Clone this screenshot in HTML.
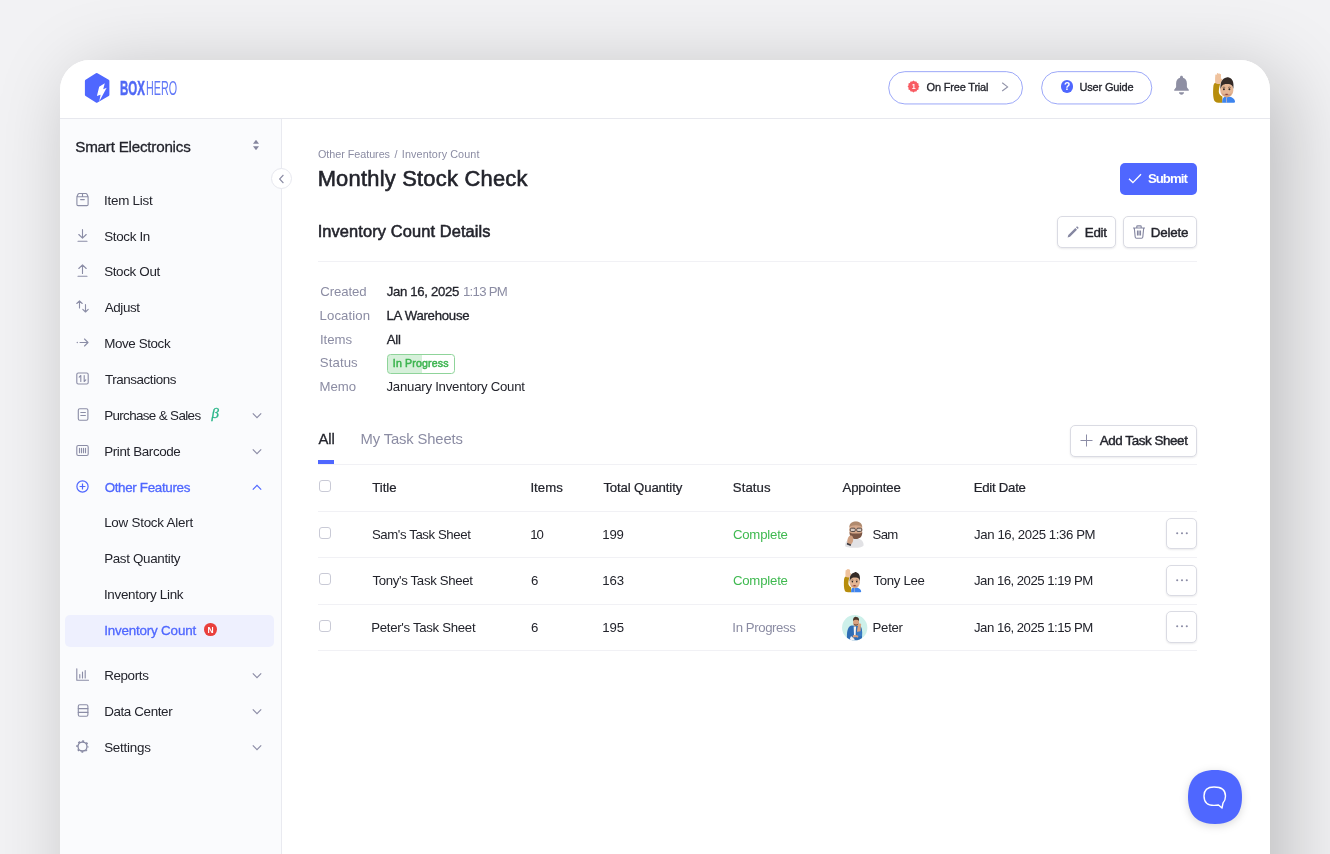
<!DOCTYPE html>
<html lang="en">
<head>
<meta charset="utf-8">
<title>BoxHero - Inventory Count</title>
<style>
*{box-sizing:border-box;margin:0;padding:0}
html,body{width:1330px;height:854px;overflow:hidden}
body{font-family:"Liberation Sans",sans-serif;color:#23242c;background:#f2f2f4;position:relative}
.abs{position:absolute}
.card{position:absolute;left:60px;top:60px;width:1210px;height:900px;background:#fff;border-radius:30px 30px 0 0;box-shadow:15px 15px 80px rgba(0,0,0,.23)}
.clip{will-change:opacity;position:absolute;left:0;top:0;width:1210px;height:900px;border-radius:30px 30px 0 0;overflow:hidden}
.hdr{position:absolute;left:0;top:0;width:1210px;height:59px;border-bottom:1px solid #e7e8ee;background:#fff}
.side{position:absolute;left:0;top:59px;width:222px;height:841px;background:#fafbfd;border-right:1px solid #e9eaf0}
.t{position:absolute;white-space:nowrap;line-height:1}
.ic{position:absolute;overflow:visible}
.pill{position:absolute;height:33px;border:1px solid #aab4fa;border-radius:17px;background:#fff}
.btn{position:absolute;border:1px solid #dadbe3;border-radius:5px;background:#fff;box-shadow:0 1px 2px rgba(20,20,40,.09)}
.hl{position:absolute;height:1px;background:#f1f1f5}
.cb{position:absolute;width:12px;height:12px;border:1px solid #c9cad6;border-radius:3px;background:#fff}
</style>
</head>
<body>
<div class="card"><div class="clip">
<header>
<div class="hdr"></div>
<svg class="ic" style="left:24px;top:12px" width="28" height="34" viewBox="0 0 28 34">
<path d="M13.500 1.300 L24.700 7.800 Q25.400 8.300 25.400 9.100 L25.400 22.800 Q25.400 23.600 24.700 24.100 L13.500 30.600 Q12.700 31.100 11.900 30.600 L1.600 24.100 Q.900 23.600 .900 22.800 L.900 9.100 Q.900 8.300 1.600 7.800 L11.900 1.300 Q12.700 .800 13.500 1.300 Z" fill="#4f67ff"/>
<path d="M20.800 11.200 L15.200 14.700 L12.900 24.100 L16.600 22.700 L15.200 29.400 L22.700 15.700 L19.200 17.300 Z" fill="#fff"/>
</svg>
<div class="t" id="logo" style="left:59.500px;top:17.900px;font-size:20.300px;color:#5068f5;transform-origin:0 0;transform:scaleX(.565);font-weight:700;-webkit-text-stroke:.5px #5068f5">BOX</div>
<div class="t" id="logo2" style="left:85.800px;top:17.900px;font-size:20.300px;color:#6178f7;transform-origin:0 0;transform:scaleX(.53)">HERO</div>
<svg class="ic" style="left:828px;top:11.350px" width="136" height="34" viewBox="0 0 136 34"><rect x=".7" y=".65" width="133.800" height="32.300" rx="16.150" fill="#fff" stroke="#8a98f7" stroke-width=".85"/></svg>
<svg class="ic" style="left:847px;top:20px" width="13" height="13" viewBox="0 0 13 13"><path d="M6.5 0.6l1.3 1 1.6-.2.7 1.5 1.5.7-.2 1.6 1 1.3-1 1.3.2 1.6-1.5.7-.7 1.5-1.6-.2-1.3 1-1.3-1-1.6.2-.7-1.5-1.5-.7.2-1.6-1-1.3 1-1.3-.2-1.6 1.5-.7.7-1.5 1.6.2z" fill="#f85c63"/></svg>
<div class="t" id="badge1" style="left:851.70px;top:23px;font-size:7px;color:#fff;font-weight:700;">1</div>
<div class="t" id="trial" style="left:866.62px;top:22px;font-size:11px;color:#23242c;letter-spacing:-0.192px;-webkit-text-stroke:.3px #23242c;">On Free Trial</div>
<svg class="ic" style="left:941px;top:22px" width="8" height="10" viewBox="0 0 8 10"><path d="M1.2 0.8 L6.6 4.9 L1.2 9" fill="none" stroke="#9092a8" stroke-width="1.1"/></svg>
<svg class="ic" style="left:981px;top:11.350px" width="112" height="34" viewBox="0 0 112 34"><rect x=".6" y=".65" width="110.200" height="32.300" rx="16.150" fill="#fff" stroke="#8a98f7" stroke-width=".85"/></svg>
<div class="abs" style="left:1000.5px;top:20px;width:12.6px;height:12.6px;border-radius:50%;background:#4f67ff"></div>
<div class="t" id="q" style="left:1004.00px;top:22px;font-size:10.3px;color:#fff;font-weight:700;">?</div>
<div class="t" id="guide" style="left:1019.39px;top:22px;font-size:11px;color:#23242c;letter-spacing:-0.149px;-webkit-text-stroke:.3px #23242c;">User Guide</div>
<svg class="ic" style="left:1113px;top:14.700px" width="17" height="21.800" viewBox="0 0 17 21" preserveAspectRatio="none"><path d="M8.5 0.8c.9 0 1.5.6 1.5 1.4v.5c2.5.7 3.9 2.8 3.9 5.5v3.6l1.9 2.5v.9H1.2v-.9l1.9-2.5V8.2c0-2.7 1.4-4.800 3.9-5.500v-.5c0-.8.6-1.400 1.500-1.400z" fill="#8e8fa3"/><path d="M6 16.700h5c0 1.400-1.100 2.300-2.500 2.300s-2.500-.9-2.500-2.300z" fill="#8e8fa3"/></svg>
<svg class="ic" style="left:1152px;top:12px" width="25" height="32" viewBox="0 0 25 32"><path d="M1.400 14 C.800 20 1 26 2.500 29 C3.500 30.600 6 30.800 10.400 30.700 L10.400 24.500 C8.500 23.500 7 22 6.800 20 C6.800 17 7.500 14 8.200 11.500 L3.200 10.800 C2.200 11.500 1.600 12.500 1.400 14 Z" fill="#b78d0c"/>
<path d="M3.300 3.600 C3.100 2.200 4.200 2 4.500 3 L4.800 2 C5 .900 6.200 .800 6.300 1.900 C6.600 .900 7.800 1 7.800 2.200 C8.300 1.600 9.200 2 9 3.200 L8.900 7 C9.800 6.400 10.800 6.800 10.200 7.800 L8.400 11.800 C7 12.300 4.500 12 3.300 11 C3 9 3 6 3.300 3.600 Z" fill="#efc29d"/>
<path d="M10.200 30.700 C10.200 26.500 11.500 24.300 14.800 24.300 C19 24.300 22.600 26.500 23 29.500 C23 30.400 22.500 30.700 21.500 30.700 Z" fill="#3d84ee"/>
<path d="M14.500 25.500 V30.700" stroke="#e9c9c0" stroke-width=".6"/>
<ellipse cx="14.800" cy="18.100" rx="6.600" ry="7.400" fill="#e4b593"/>
<path d="M8.600 17.500 C7.800 11 10 6.500 14.500 5.600 C16 4.800 17 5.200 17.500 5.800 C20.500 6.800 22.200 10.500 21.300 17 C20.800 13.500 19.500 11.800 14.800 11.900 C10.500 11.900 9.300 14 8.600 17.500 Z" fill="#352b27"/>
<path d="M9.800 20.500 C10.800 26.200 18.800 26.200 19.900 20.500 C18.500 23.300 11.300 23.300 9.800 20.500 Z" fill="#cf9d7d"/>
<ellipse cx="11.900" cy="17.300" rx=".95" ry="1.050" fill="#2b2320"/><ellipse cx="17.400" cy="17.300" rx=".95" ry="1.050" fill="#2b2320"/>
<path d="M10.600 15.500 Q11.900 14.700 13.200 15.500 M16.100 15.500 Q17.400 14.700 18.700 15.500" stroke="#4a3a32" stroke-width=".6" fill="none"/>
<path d="M12.600 22 Q14.600 21.300 16.600 22 Q14.600 24.200 12.600 22 Z" fill="#8c3a36"/></svg>
</header>
<aside><nav>
<div class="side"></div>
<div class="t" id="store" style="left:15.26px;top:79px;font-size:15.2px;color:#23242c;letter-spacing:-0.219px;-webkit-text-stroke:.3px #23242c;">Smart Electronics</div>
<svg class="ic" style="left:192px;top:79px" width="8" height="12" viewBox="0 0 8 12"><path d="M4 .8 L7 4.700 H1 Z M4 11.200 L1 7.300 H7 Z" fill="#85869e"/></svg>
<div class="abs" style="left:211px;top:108px;width:21px;height:21px;border-radius:50%;background:#fff;border:1px solid #e6e7ee"></div>
<svg class="ic" style="left:218px;top:114px" width="7" height="10" viewBox="0 0 7 10"><path d="M5.400 1 L1.600 5 L5.400 9" fill="none" stroke="#8a8ba3" stroke-width="1.1"/></svg>
<svg class="ic" style="left:15.800px;top:133.30px" width="13" height="13" viewBox="0 0 13 13"><path d="M.9 3.700 V11.400 Q.9 12.600 2.100 12.600 H10.900 Q12.100 12.600 12.100 11.400 V3.700 M.9 3.700 L2 1.300 Q2.400 .5 3.200 .5 H9.800 Q10.600 .5 11 1.300 L12.100 3.700 M.9 3.700 H12.100 M6.500 .5 V3.700 M4.600 6.600 H8.300" stroke="#8b8da6" stroke-width="1.120" fill="none" stroke-linecap="round" stroke-linejoin="round"/></svg>
<div class="t" id="m0" style="left:43.95px;top:134px;font-size:13.4px;color:#23242c;letter-spacing:-0.224px;">Item List</div>
<svg class="ic" style="left:15.800px;top:169.30px" width="13" height="13" viewBox="0 0 13 13"><path d="M6.500 .5 V9 M2.800 5.500 L6.500 9.200 L10.200 5.500 M2 12.300 H11" stroke="#8b8da6" stroke-width="1.120" fill="none" stroke-linecap="round" stroke-linejoin="round"/></svg>
<div class="t" id="m1" style="left:44.17px;top:170px;font-size:13.4px;color:#23242c;letter-spacing:-0.322px;">Stock In</div>
<svg class="ic" style="left:15.800px;top:204.30px" width="13" height="13" viewBox="0 0 13 13"><path d="M6.500 9.500 V1 M2.800 4.500 L6.500 .8 L10.200 4.500 M2 12.300 H11" stroke="#8b8da6" stroke-width="1.120" fill="none" stroke-linecap="round" stroke-linejoin="round"/></svg>
<div class="t" id="m2" style="left:44.17px;top:205px;font-size:13.4px;color:#23242c;letter-spacing:-0.342px;">Stock Out</div>
<svg class="ic" style="left:15.800px;top:240.30px" width="13" height="13" viewBox="0 0 13 13"><path d="M3.500 8 V.8 M.8 3.500 L3.500 .8 L6.200 3.500 M9.500 4.500 V12 M6.800 9.300 L9.500 12 L12.200 9.300" stroke="#8b8da6" stroke-width="1.120" fill="none" stroke-linecap="round" stroke-linejoin="round"/></svg>
<div class="t" id="m3" style="left:44.86px;top:241px;font-size:13.4px;color:#23242c;letter-spacing:-0.443px;">Adjust</div>
<svg class="ic" style="left:15.800px;top:276.30px" width="13" height="13" viewBox="0 0 13 13"><path d="M4 6.500 H12 M8.500 3 L12 6.500 L8.500 10" stroke="#8b8da6" stroke-width="1.120" fill="none" stroke-linecap="round" stroke-linejoin="round"/><circle cx="1.300" cy="6.500" r=".7" fill="#8c8da6"/></svg>
<div class="t" id="m4" style="left:44.15px;top:277px;font-size:13.4px;color:#23242c;letter-spacing:-0.389px;">Move Stock</div>
<svg class="ic" style="left:15.800px;top:312.30px" width="13" height="13" viewBox="0 0 13 13"><rect x=".8" y="1" width="11.400" height="11" rx="1.500" stroke="#8b8da6" stroke-width="1.120" fill="none" stroke-linecap="round" stroke-linejoin="round"/><path d="M4.800 9.500 V3.500 M3.200 5.200 L4.800 3.500 M8.200 3.500 V9.500 M9.800 7.800 L8.200 9.500" stroke="#8b8da6" stroke-width="1.120" fill="none" stroke-linecap="round" stroke-linejoin="round"/></svg>
<div class="t" id="m5" style="left:44.92px;top:313px;font-size:13.4px;color:#23242c;letter-spacing:-0.416px;">Transactions</div>
<svg class="ic" style="left:15.800px;top:348.30px" width="13" height="13" viewBox="0 0 13 13"><rect x="2.300" y=".8" width="9.600" height="11.400" rx="1.500" stroke="#8b8da6" stroke-width="1.120" fill="none" stroke-linecap="round" stroke-linejoin="round"/><path d="M4.800 4.500 H9.400 M4.800 7.500 H9.400" stroke="#8b8da6" stroke-width="1.120" fill="none" stroke-linecap="round" stroke-linejoin="round"/></svg>
<div class="t" id="m6" style="left:44.15px;top:349px;font-size:13.4px;color:#23242c;letter-spacing:-0.633px;">Purchase &amp; Sales</div>
<svg class="ic" style="left:191.500px;top:352.20px" width="10" height="7" viewBox="0 0 10 7"><path d="M.8 1.400 L5 5.600 L9.200 1.400" fill="none" stroke="#8c8da6" stroke-width="1.200"/></svg>
<svg class="ic" style="left:15.800px;top:384.30px" width="13" height="13" viewBox="0 0 13 13"><rect x=".8" y="1.500" width="11.400" height="10" rx="1.500" stroke="#8b8da6" stroke-width="1.120" fill="none" stroke-linecap="round" stroke-linejoin="round"/><path d="M3.500 4.300 V8.700 M5.500 4.300 V8.700 M7.500 4.300 V8.700 M9.500 4.300 V8.700" stroke="#8b8da6" stroke-width="1.120" fill="none" stroke-linecap="round" stroke-linejoin="round"/></svg>
<div class="t" id="m7" style="left:44.15px;top:385px;font-size:13.4px;color:#23242c;letter-spacing:-0.372px;">Print Barcode</div>
<svg class="ic" style="left:191.500px;top:388.20px" width="10" height="7" viewBox="0 0 10 7"><path d="M.8 1.400 L5 5.600 L9.200 1.400" fill="none" stroke="#8c8da6" stroke-width="1.200"/></svg>
<div class="t" id="beta" style="left:151.50px;top:346px;font-size:15px;color:#2bb68a;font-family:'Liberation Serif','DejaVu Serif',serif;font-style:italic;-webkit-text-stroke:.3px #2bb68a;">β</div>
<svg class="ic" style="left:15.800px;top:419.50px" width="13" height="13" viewBox="0 0 13 13"><circle cx="6.500" cy="6.500" r="5.600" stroke="#4f67ff" stroke-width="1.200" fill="none"/><path d="M6.500 3.600 V9.400 M3.600 6.500 H9.400" stroke="#4f67ff" stroke-width="1.200" fill="none"/></svg>
<div class="t" id="m8" style="left:44.64px;top:421px;font-size:13.4px;color:#4f67ff;letter-spacing:-0.335px;-webkit-text-stroke:.3px #4f67ff;">Other Features</div>
<svg class="ic" style="left:191.500px;top:423.90px" width="10" height="7" viewBox="0 0 10 7"><path d="M.8 5.600 L5 1.400 L9.200 5.600" fill="none" stroke="#4f67ff" stroke-width="1.200"/></svg>
<div class="abs" style="left:5px;top:555px;width:208.700px;height:31.800px;border-radius:5px;background:#eef0fe"></div>
<div class="t" id="s0" style="left:44.15px;top:456px;font-size:13.4px;color:#23242c;letter-spacing:-0.238px;">Low Stock Alert</div>
<div class="t" id="s1" style="left:44.15px;top:492px;font-size:13.4px;color:#23242c;letter-spacing:-0.330px;">Past Quantity</div>
<div class="t" id="s2" style="left:43.95px;top:528px;font-size:13.4px;color:#23242c;letter-spacing:-0.290px;">Inventory Link</div>
<div class="t" id="s3" style="left:44.13px;top:564px;font-size:13.4px;color:#4f67ff;letter-spacing:-0.180px;-webkit-text-stroke:.3px #4f67ff;">Inventory Count</div>
<div class="abs" style="left:144.100px;top:563px;width:12.800px;height:12.800px;border-radius:50%;background:#e9403c"></div>
<div class="t" id="nb" style="left:147.60px;top:566px;font-size:8.5px;color:#fff;font-weight:700;">N</div>
<svg class="ic" style="left:15.800px;top:608.30px" width="13" height="13" viewBox="0 0 13 13"><path d="M.8 .8 V12.200 H12.500 M3.800 10 V6.500 M6.500 10 V4 M9.200 10 V2.500" stroke="#8b8da6" stroke-width="1.120" fill="none" stroke-linecap="round" stroke-linejoin="round"/></svg>
<div class="t" id="r0" style="left:44.15px;top:609px;font-size:13.4px;color:#23242c;letter-spacing:-0.365px;">Reports</div>
<svg class="ic" style="left:191.500px;top:612.40px" width="10" height="7" viewBox="0 0 10 7"><path d="M.8 1.400 L5 5.600 L9.200 1.400" fill="none" stroke="#8c8da6" stroke-width="1.200"/></svg>
<svg class="ic" style="left:15.800px;top:644.30px" width="13" height="13" viewBox="0 0 13 13"><rect x="2.300" y=".8" width="9.600" height="11.400" rx="1.500" stroke="#8b8da6" stroke-width="1.120" fill="none" stroke-linecap="round" stroke-linejoin="round"/><path d="M2.300 4.600 H11.900 M2.300 8.400 H11.900" stroke="#8b8da6" stroke-width="1.120" fill="none" stroke-linecap="round" stroke-linejoin="round"/></svg>
<div class="t" id="r1" style="left:44.15px;top:645px;font-size:13.4px;color:#23242c;letter-spacing:-0.372px;">Data Center</div>
<svg class="ic" style="left:191.500px;top:648.40px" width="10" height="7" viewBox="0 0 10 7"><path d="M.8 1.400 L5 5.600 L9.200 1.400" fill="none" stroke="#8c8da6" stroke-width="1.200"/></svg>
<svg class="ic" style="left:15.800px;top:680.30px" width="13" height="13" viewBox="0 0 13 13"><circle cx="6.500" cy="6.500" r="4.500" stroke="#8587a1" stroke-width="1.300" fill="none"/><circle cx="6.500" cy="6.500" r="5.500" stroke="#8587a1" stroke-width="1.400" fill="none" stroke-dasharray="1.900 2.420" stroke-dashoffset=".95"/></svg>
<div class="t" id="r2" style="left:44.17px;top:681px;font-size:13.4px;color:#23242c;letter-spacing:-0.239px;">Settings</div>
<svg class="ic" style="left:191.500px;top:684.40px" width="10" height="7" viewBox="0 0 10 7"><path d="M.8 1.400 L5 5.600 L9.200 1.400" fill="none" stroke="#8c8da6" stroke-width="1.200"/></svg>
</nav></aside>
<main>
<div class="t" id="bc" style="left:257.99px;top:89px;font-size:10.8px;color:#8b8ca3;letter-spacing:-0.045px;">Other Features</div>
<div class="t" id="bc2" style="left:334.59px;top:89px;font-size:10.8px;color:#8b8ca3;">/</div>
<div class="t" id="bc3" style="left:341.87px;top:89px;font-size:10.8px;color:#8b8ca3;letter-spacing:0.096px;">Inventory Count</div>
<div class="t" id="title" style="left:257.64px;top:108px;font-size:21.9px;color:#23242c;letter-spacing:0.232px;-webkit-text-stroke:.6px #23242c;">Monthly Stock Check</div>
<div class="abs" style="left:1059.800px;top:102.600px;width:77.300px;height:32.200px;border-radius:5px;background:#4f67ff"></div>
<svg class="ic" style="left:1068px;top:112.800px" width="14" height="11" viewBox="0 0 14 11"><path d="M1 5.800 L4.900 9.600 L13 1.200" fill="none" stroke="#fff" stroke-width="1.350"/></svg>
<div class="t" id="submit" style="left:1087.90px;top:112px;font-size:13.2px;color:#fff;font-weight:700;letter-spacing:-0.959px;">Submit</div>
<div class="t" id="icd" style="left:257.64px;top:163px;font-size:16.4px;color:#23242c;letter-spacing:0.114px;-webkit-text-stroke:.55px #23242c;">Inventory Count Details</div>
<div class="btn" style="left:997px;top:156px;width:59px;height:32px"></div>
<svg class="ic" style="left:1006.500px;top:165.500px" width="13" height="13" viewBox="0 0 13 13"><path d="M.6 11.600 L1.300 9 L8.300 2 L10 3.700 L3 10.700 Z M9 1.300 L9.700 .6 Q10.100 .2 10.500 .6 L11.400 1.500 Q11.800 1.900 11.400 2.300 L10.700 3 Z" fill="#8587a1"/></svg>
<div class="t" id="edit" style="left:1024.84px;top:166px;font-size:13.4px;color:#23242c;letter-spacing:-0.330px;-webkit-text-stroke:.4px #23242c;">Edit</div>
<div class="btn" style="left:1063px;top:156px;width:74px;height:32px"></div>
<svg class="ic" style="left:1072px;top:165px" width="14" height="14" viewBox="0 0 14 14"><path d="M1 3 H13 M4.800 3 V1.500 Q4.800 .8 5.500 .8 H8.500 Q9.200 .8 9.200 1.500 V3 M2.300 3 L3.200 12 Q3.300 13.200 4.500 13.200 H9.500 Q10.700 13.200 10.800 12 L11.700 3 M5.500 5.500 V10.500 M7 5.500 V10.500 M8.500 5.500 V10.500" fill="none" stroke="#8587a1" stroke-width="1.150"/></svg>
<div class="t" id="delete" style="left:1090.83px;top:166px;font-size:13.4px;color:#23242c;letter-spacing:-0.193px;-webkit-text-stroke:.4px #23242c;">Delete</div>
<div class="hl" style="left:258px;top:201px;width:879px"></div>
<div class="t" id="l0" style="left:260.28px;top:225px;font-size:13.2px;color:#8b8ca3;letter-spacing:-0.081px;">Created</div>
<div class="t" id="l1" style="left:259.59px;top:249px;font-size:13.2px;color:#8b8ca3;letter-spacing:0.085px;">Location</div>
<div class="t" id="l2" style="left:259.90px;top:273px;font-size:13.2px;color:#8b8ca3;letter-spacing:0.014px;">Items</div>
<div class="t" id="l3" style="left:259.84px;top:296px;font-size:13.2px;color:#8b8ca3;letter-spacing:0.097px;">Status</div>
<div class="t" id="l4" style="left:259.59px;top:320px;font-size:13.2px;color:#8b8ca3;letter-spacing:-0.016px;">Memo</div>
<div class="t" id="v0" style="left:326.73px;top:225px;font-size:13.2px;color:#23242c;letter-spacing:-0.337px;-webkit-text-stroke:.3px #23242c;">Jan 16, 2025</div>
<div class="t" id="v0b" style="left:402.97px;top:225px;font-size:13.2px;color:#8b8ca3;letter-spacing:-0.712px;">1:13 PM</div>
<div class="t" id="v1" style="left:326.44px;top:249px;font-size:13.2px;color:#23242c;letter-spacing:-0.262px;-webkit-text-stroke:.3px #23242c;">LA Warehouse</div>
<div class="t" id="v2" style="left:326.71px;top:273px;font-size:13.2px;color:#23242c;letter-spacing:-0.171px;-webkit-text-stroke:.3px #23242c;">All</div>
<div class="abs" style="left:327px;top:294px;width:68.300px;height:19.700px;border:1px solid #8fd49a;border-radius:3.500px;background:linear-gradient(90deg,#d6f0da 0,#d6f0da 33.700px,#fff 33.700px,#fff 100%)"></div>
<div class="t" id="ip" style="left:332.79px;top:298px;font-size:10.6px;color:#3cb44f;letter-spacing:0.167px;-webkit-text-stroke:.5px #3cb44f;">In Progress</div>
<div class="t" id="v4" style="left:326.50px;top:320px;font-size:13.2px;color:#23242c;letter-spacing:-0.237px;">January Inventory Count</div>
<div class="t" id="tab1" style="left:258.44px;top:372px;font-size:14.8px;color:#23242c;letter-spacing:-0.101px;-webkit-text-stroke:.3px #23242c;">All</div>
<div class="t" id="tab2" style="left:300.47px;top:372px;font-size:14.8px;color:#8b8ca3;letter-spacing:-0.137px;">My Task Sheets</div>
<div class="hl" style="left:258px;top:404px;width:879px"></div>
<div class="abs" style="left:258px;top:400px;width:16px;height:4px;background:#4f67ff"></div>
<div class="btn" style="left:1010.100px;top:365px;width:126.900px;height:32px"></div>
<svg class="ic" style="left:1020px;top:374.300px" width="13" height="13" viewBox="0 0 13 13"><path d="M6.500 .5 V12.500 M.5 6.500 H12.500" fill="none" stroke="#8c8da6" stroke-width="1"/></svg>
<div class="t" id="add" style="left:1039.73px;top:374px;font-size:13.4px;color:#23242c;letter-spacing:-0.415px;-webkit-text-stroke:.4px #23242c;">Add Task Sheet</div>
<div class="cb" style="left:259px;top:420.400px"></div>
<div class="t" id="h1" style="left:312.31px;top:421px;font-size:13.2px;color:#23242c;letter-spacing:-0.033px;-webkit-text-stroke:.22px #23242c;">Title</div>
<div class="t" id="h2" style="left:470.39px;top:421px;font-size:13.2px;color:#23242c;letter-spacing:0.084px;-webkit-text-stroke:.22px #23242c;">Items</div>
<div class="t" id="h3" style="left:543.38px;top:421px;font-size:13.2px;color:#23242c;letter-spacing:-0.135px;-webkit-text-stroke:.22px #23242c;">Total Quantity</div>
<div class="t" id="h4" style="left:672.79px;top:421px;font-size:13.2px;color:#23242c;letter-spacing:0.079px;-webkit-text-stroke:.22px #23242c;">Status</div>
<div class="t" id="h5" style="left:782.50px;top:421px;font-size:13.2px;color:#23242c;letter-spacing:-0.146px;-webkit-text-stroke:.22px #23242c;">Appointee</div>
<div class="t" id="h6" style="left:913.63px;top:421px;font-size:13.2px;color:#23242c;letter-spacing:-0.248px;-webkit-text-stroke:.22px #23242c;">Edit Date</div>
<div class="hl" style="left:258px;top:451px;width:879px"></div>
<div class="cb" style="left:259px;top:466.90px"></div>
<div class="t" id="a0" style="left:311.94px;top:468px;font-size:13.2px;color:#23242c;letter-spacing:-0.401px;">Sam's Task Sheet</div>
<div class="t" id="b0" style="left:470.22px;top:468px;font-size:13.2px;color:#23242c;letter-spacing:-1.089px;">10</div>
<div class="t" id="c0" style="left:542.37px;top:468px;font-size:13.2px;color:#23242c;letter-spacing:-0.243px;">199</div>
<div class="t" id="d0" style="left:672.91px;top:468px;font-size:13.2px;color:#3fb950;letter-spacing:-0.203px;">Complete</div>
<div class="t" id="e0" style="left:812.56px;top:468px;font-size:13.2px;color:#23242c;letter-spacing:-0.680px;">Sam</div>
<div class="t" id="f0" style="left:914.06px;top:468px;font-size:13.2px;color:#23242c;letter-spacing:-0.394px;">Jan 16, 2025 1:36 PM</div>
<div class="btn" style="left:1105.700px;top:458.10px;width:31px;height:31.400px"></div>
<svg class="ic" style="left:1115.700px;top:471.90px" width="12" height="3" viewBox="0 0 12 3"><circle cx="1.200" cy="1.200" r="1.050" fill="#8c8da6"/><circle cx="6" cy="1.200" r="1.050" fill="#8c8da6"/><circle cx="10.800" cy="1.200" r="1.050" fill="#8c8da6"/></svg>
<div class="hl" style="left:258px;top:497.00px;width:879px"></div>
<div class="cb" style="left:259px;top:512.90px"></div>
<div class="t" id="a1" style="left:312.39px;top:514px;font-size:13.2px;color:#23242c;letter-spacing:-0.311px;">Tony's Task Sheet</div>
<div class="t" id="b1" style="left:470.94px;top:514px;font-size:13.2px;color:#23242c;">6</div>
<div class="t" id="c1" style="left:542.37px;top:514px;font-size:13.2px;color:#23242c;letter-spacing:-0.154px;">163</div>
<div class="t" id="d1" style="left:672.91px;top:514px;font-size:13.2px;color:#3fb950;letter-spacing:-0.203px;">Complete</div>
<div class="t" id="e1" style="left:813.51px;top:514px;font-size:13.2px;color:#23242c;letter-spacing:-0.323px;">Tony Lee</div>
<div class="t" id="f1" style="left:914.06px;top:514px;font-size:13.2px;color:#23242c;letter-spacing:-0.522px;">Jan 16, 2025 1:19 PM</div>
<div class="btn" style="left:1105.700px;top:504.70px;width:31px;height:31.400px"></div>
<svg class="ic" style="left:1115.700px;top:518.50px" width="12" height="3" viewBox="0 0 12 3"><circle cx="1.200" cy="1.200" r="1.050" fill="#8c8da6"/><circle cx="6" cy="1.200" r="1.050" fill="#8c8da6"/><circle cx="10.800" cy="1.200" r="1.050" fill="#8c8da6"/></svg>
<div class="hl" style="left:258px;top:544.00px;width:879px"></div>
<div class="cb" style="left:259px;top:559.90px"></div>
<div class="t" id="a2" style="left:311.34px;top:561px;font-size:13.2px;color:#23242c;letter-spacing:-0.299px;">Peter's Task Sheet</div>
<div class="t" id="b2" style="left:470.94px;top:561px;font-size:13.2px;color:#23242c;">6</div>
<div class="t" id="c2" style="left:542.37px;top:561px;font-size:13.2px;color:#23242c;letter-spacing:-0.135px;">195</div>
<div class="t" id="d2" style="left:672.37px;top:561px;font-size:13.2px;color:#8b8ca3;letter-spacing:-0.396px;">In Progress</div>
<div class="t" id="e2" style="left:812.55px;top:561px;font-size:13.2px;color:#23242c;letter-spacing:-0.263px;">Peter</div>
<div class="t" id="f2" style="left:914.06px;top:561px;font-size:13.2px;color:#23242c;letter-spacing:-0.522px;">Jan 16, 2025 1:15 PM</div>
<div class="btn" style="left:1105.700px;top:551.30px;width:31px;height:31.400px"></div>
<svg class="ic" style="left:1115.700px;top:565.10px" width="12" height="3" viewBox="0 0 12 3"><circle cx="1.200" cy="1.200" r="1.050" fill="#8c8da6"/><circle cx="6" cy="1.200" r="1.050" fill="#8c8da6"/><circle cx="10.800" cy="1.200" r="1.050" fill="#8c8da6"/></svg>
<div class="hl" style="left:258px;top:590.20px;width:879px"></div>
<svg class="ic" style="left:783px;top:459.800px" width="24" height="29" viewBox="0 0 24 29">
<path d="M2.100 25.500 C2.100 21 5.500 18.200 11.500 18 C17.500 18 20.600 21 20.600 25 C20.600 27.200 16 27.800 11.500 27.800 C6 27.800 2.100 27.400 2.100 25.500 Z" fill="#e2e2e5"/>
<ellipse cx="12.800" cy="9.800" rx="6.600" ry="8" fill="#d6a98c"/>
<path d="M6.300 7.500 C6.500 3 9.500 1.600 12.800 1.600 C16.100 1.600 19.100 3 19.300 7.500 C17.500 4.500 8.100 4.500 6.300 7.500 Z" fill="#b08a6e"/>
<path d="M6.500 12 C6.500 17 9 19 12.800 19 C16.600 19 19.300 17 19.300 12 C18 14 15 13.500 12.800 13.500 C10.600 13.500 8 14 6.500 12 Z" fill="#7a5645"/>
<rect x="7.300" y="8.200" width="5" height="3.300" rx="1.200" fill="#d9c9c0" stroke="#3a3434" stroke-width=".8"/><rect x="13.700" y="8.200" width="5" height="3.300" rx="1.200" fill="#d9c9c0" stroke="#3a3434" stroke-width=".8"/>
<path d="M4.300 22 C4.300 18 6 15.500 7.800 15.500 C9.500 15.500 10.500 17.500 10.200 20 C10 22.500 8.500 24.800 6.500 24.800 C5 24.800 4.300 23.500 4.300 22 Z" fill="#cf9f80"/>
<path d="M4 22.800 L8.200 24.400 L7.600 26 L3.800 24.600 Z" fill="#3a3a40"/>
</svg>
<svg class="ic" style="left:783.350px;top:508.400px" width="19.750" height="25.300" viewBox="0 0 25 32"><path d="M1.400 14 C.800 20 1 26 2.500 29 C3.500 30.600 6 30.800 10.400 30.700 L10.400 24.500 C8.500 23.500 7 22 6.800 20 C6.800 17 7.500 14 8.200 11.500 L3.200 10.800 C2.200 11.500 1.600 12.500 1.400 14 Z" fill="#b78d0c"/>
<path d="M3.300 3.600 C3.100 2.200 4.200 2 4.500 3 L4.800 2 C5 .900 6.200 .800 6.300 1.900 C6.600 .900 7.800 1 7.800 2.200 C8.300 1.600 9.200 2 9 3.200 L8.900 7 C9.800 6.400 10.800 6.800 10.200 7.800 L8.400 11.800 C7 12.300 4.500 12 3.300 11 C3 9 3 6 3.300 3.600 Z" fill="#efc29d"/>
<path d="M10.200 30.700 C10.200 26.500 11.500 24.300 14.800 24.300 C19 24.300 22.600 26.500 23 29.500 C23 30.400 22.500 30.700 21.500 30.700 Z" fill="#3d84ee"/>
<path d="M14.500 25.500 V30.700" stroke="#e9c9c0" stroke-width=".6"/>
<ellipse cx="14.800" cy="18.100" rx="6.600" ry="7.400" fill="#e4b593"/>
<path d="M8.600 17.500 C7.800 11 10 6.500 14.500 5.600 C16 4.800 17 5.200 17.500 5.800 C20.500 6.800 22.200 10.500 21.300 17 C20.800 13.500 19.500 11.800 14.800 11.900 C10.500 11.900 9.300 14 8.600 17.500 Z" fill="#352b27"/>
<path d="M9.800 20.500 C10.800 26.200 18.800 26.200 19.900 20.500 C18.500 23.300 11.300 23.300 9.800 20.500 Z" fill="#cf9d7d"/>
<ellipse cx="11.900" cy="17.300" rx=".95" ry="1.050" fill="#2b2320"/><ellipse cx="17.400" cy="17.300" rx=".95" ry="1.050" fill="#2b2320"/>
<path d="M10.600 15.500 Q11.900 14.700 13.200 15.500 M16.100 15.500 Q17.400 14.700 18.700 15.500" stroke="#4a3a32" stroke-width=".6" fill="none"/>
<path d="M12.600 22 Q14.600 21.300 16.600 22 Q14.600 24.200 12.600 22 Z" fill="#8c3a36"/></svg>
<svg class="ic" style="left:782px;top:554.700px" width="25.400" height="25.400" viewBox="0 0 25.400 25.400">
<defs><clipPath id="pc"><circle cx="12.700" cy="12.700" r="12.650"/></clipPath></defs>
<circle cx="12.700" cy="12.700" r="12.650" fill="#cdf0ea"/>
<g clip-path="url(#pc)">
<path d="M5 26 C4.500 17 5.500 11.500 9.500 10.600 L17.500 10.800 C20.500 11.500 20.500 17 19.800 26 Z" fill="#2f6db5"/>
<path d="M11.700 11.500 H14.100 L13.600 20.400 H12 Z" fill="#f3f3f5"/>
<path d="M15 18.500 C15 14 15.500 10.500 17.500 8.200 L19.200 9 C18.500 12 18.800 15.500 18.500 18.500 Z" fill="#d9a27f"/>
<path d="M14.500 17 L19.500 16 L20 21 L15 21.500 Z" fill="#3b7cc6"/>
<path d="M10.800 20.600 C12.500 19.800 15 20 16.400 21 L16 22.700 C14.500 22.200 12.500 22.200 11 22.700 Z" fill="#d9a27f"/>
<ellipse cx="14.100" cy="6.900" rx="3" ry="4.200" fill="#d9a27f"/>
<path d="M11.100 6 C10.800 2.500 13 1.700 14.300 1.900 C16.300 1.900 17.400 3.500 17 6 C16 4.300 12.500 4.300 11.100 6 Z" fill="#4a3528"/>
<path d="M11.600 8.500 C12 11.500 15.800 11.500 16.600 8.500 C15.500 9.800 12.800 9.800 11.600 8.500 Z" fill="#6a4a38"/>
<path d="M7 26 L9 21 L12.500 24 L12.500 26 Z" fill="#f0f0f3"/>
</g></svg>
</main>
<svg class="ic" style="left:1128px;top:710px;filter:drop-shadow(0 2px 4px rgba(0,0,0,.15))" width="54" height="54" viewBox="0 0 54 54">
<path d="M27 0 C45 0 54 9 54 27 C54 45 45 54 27 54 C9 54 0 45 0 27 C0 9 9 0 27 0 Z" fill="#4f67ff"/>
<path d="M26 17 C33 17 37.500 19.500 37.500 26 C37.500 29.500 36.500 31.500 35 33 L34 38 L30.500 35 C29 35.300 27.500 35.400 26 35.400 C19.500 35.400 16 32.500 16 26 C16 19.500 19.500 17 26 17 Z" fill="none" stroke="#fff" stroke-width="1.400" stroke-linejoin="round"/>
</svg>
</div></div>
</body>
</html>
